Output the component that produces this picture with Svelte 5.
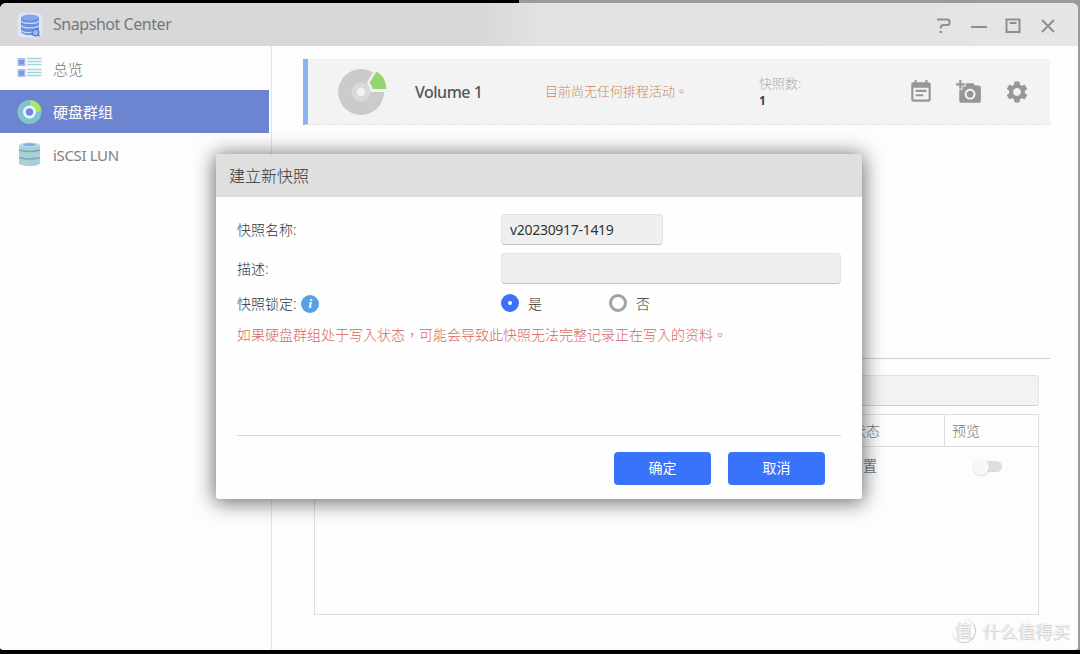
<script lang="ts">
  type MenuItem = { id: string; label: string };

  const menu: MenuItem[] = [
    { id: 'overview', label: '总览' },
    { id: 'volume', label: '硬盘群组' },
    { id: 'lun', label: 'iSCSI LUN' }
  ];

  let active = $state('volume');
  let snapshotName = $state('v20230917-1419');
  let description = $state('');
  let locked = $state(true);
</script>

<div class="desktop">
  <div class="window">
    <header class="titlebar">
      <svg class="app-icon" width="26" height="26" viewBox="0 0 26 26">
        <rect x="0.5" y="0.5" width="25" height="25" rx="6" fill="#dce6f8" />
        <path d="M4 5v14.5c0 2 4 3.700 9 3.700s9-1.700 9-3.700V5z" fill="#6f90dc" />
        <ellipse cx="13" cy="5.500" rx="9" ry="3" fill="#85a6e8" />
        <path d="M4 9.200c2 3 16 3 18 0M4 13.700c2 3 16 3 18 0M4 18.200c2 3 10 3 13 1.500" fill="none" stroke="#c3d5f8" stroke-width="1.300" />
        <circle cx="18.500" cy="20.500" r="3.300" fill="#9db7ee" stroke="#5a7dd2" stroke-width="1.400" />
        <path d="M21 23l1.500 1.200" stroke="#5a7dd2" stroke-width="1.400" />
      </svg>
      <h1>Snapshot Center</h1>
      <div class="controls">
        <svg width="16" height="18" viewBox="0 0 16 18" fill="none" stroke="#8f8f8f" stroke-width="2">
          <path d="M1 2.500h10.500q2 0 2 2v1.500q0 2-2 2H7.500q-3 0-3 3.500" />
          <path d="M3.500 15h2.500" />
        </svg>
        <svg width="16" height="18" viewBox="0 0 16 18" fill="none" stroke="#8f8f8f" stroke-width="2">
          <path d="M0 10h16" />
        </svg>
        <svg width="16" height="18" viewBox="0 0 16 18" fill="none" stroke="#8f8f8f" stroke-width="2">
          <path d="M1.500 2.500h13v12.500h-13zM4.500 6h7" />
        </svg>
        <svg width="16" height="18" viewBox="0 0 16 18" fill="none" stroke="#8f8f8f" stroke-width="2">
          <path d="M2 3l12 12M14 3L2 15" />
        </svg>
      </div>
    </header>

    <div class="body">
      <nav class="sidebar">
        {#each menu as item}
          <button class="menu-item" class:active={active === item.id} onclick={() => (active = item.id)}>
            {#if item.id === 'overview'}
              <svg width="26" height="26" viewBox="0 0 26 26">
                <path d="M1.500 3h8v8h-8zM1.500 14h8v8h-8z" fill="#a9c0f0" />
                <path d="M3 5h5v4.500H3zM3 16h5v4.500H3z" fill="#7796e4" />
                <path d="M11 3.500h14.500M11 6.500h14.500M11 9.500h14.500M11 14.500h14.500M11 17.500h14.500M11 20.500h14.500" stroke="#a5d5dc" stroke-width="1.500" />
              </svg>
            {:else if item.id === 'volume'}
              <svg width="26" height="26" viewBox="0 0 26 26">
                <circle cx="13.500" cy="13" r="12" fill="#7fc4cf" />
                <path d="M14.500 1a12 12 0 0 1 11 11l-5.500 1a6.500 6.500 0 0 0-5.500-6z" fill="#abe866" />
                <circle cx="13.500" cy="13" r="6.500" fill="#f1f5fd" />
                <circle cx="13.500" cy="13" r="3.700" fill="#7685df" />
              </svg>
            {:else}
              <svg width="26" height="26" viewBox="0 0 26 26">
                <path d="M3 3v5q10.500 3 21 0V3zM3 8.500v6q10.500 3.500 21 0v-6zM3 15.500v6.500q10.500 4.500 21 0v-6.500z" fill="#a9d0d6" />
                <path d="M3 8q10.500 3 21 0M3 15.500q10.500 3 21 0" fill="none" stroke="#7aa9b4" stroke-width="1.500" />
                <ellipse cx="13.500" cy="2.900" rx="10.300" ry="2.300" fill="#b9dde2" />
                <ellipse cx="13.500" cy="2.700" rx="6.500" ry="1.400" fill="#8aa6e8" />
              </svg>
            {/if}
            <span>{item.label}</span>
          </button>
        {/each}
      </nav>

      <main class="content">
        <section class="volume">
          <svg class="disk" width="50" height="50" viewBox="0 0 50 50">
            <circle cx="24" cy="27" r="23" fill="#cbcbcb" />
            <circle cx="24" cy="27" r="9.500" fill="#d9d9d9" />
            <path d="M39 5.500L31.500 18q3 3.500 3.500 7.500h16" fill="#f3f3f3" stroke="#f3f3f3" stroke-width="3" />
            <circle cx="24" cy="27" r="4.200" fill="#f3f3f3" />
            <path d="M39.500 6.500Q49 12 49.500 24H35.500Q35 20 32.500 17.500z" fill="#96d56f" />
          </svg>
          <strong class="volume-name">Volume 1</strong>
          <span class="schedule">目前尚无任何排程活动。</span>
          <div class="count">
            <span>快照数:</span>
            <b>1</b>
          </div>
          <div class="tools">
            <svg width="26" height="26" viewBox="0 0 24 24" fill="#979797">
              <path d="M17 10H7v2h10v-2zm2-7h-1V1h-2v2H8V1H6v2H5c-1.110 0-1.990.9-1.990 2L3 19c0 1.100.89 2 2 2h14c1.100 0 2-.9 2-2V5c0-1.100-.9-2-2-2zm0 16H5V8h14v11zm-5-5H7v2h7v-2z" />
            </svg>
            <svg width="26" height="26" viewBox="0 0 24 24" fill="#979797">
              <path d="M3 4V1h2v3h3v2H5v3H3V6H0V4h3zm3 6V7h3V4h7l1.830 2H21c1.100 0 2 .9 2 2v12c0 1.100-.9 2-2 2H5c-1.100 0-2-.9-2-2V10h3zm7 9c2.760 0 5-2.240 5-5s-2.240-5-5-5-5 2.240-5 5 2.240 5 5 5zm-3.200-5c0 1.770 1.430 3.200 3.200 3.200s3.200-1.430 3.200-3.200-1.430-3.200-3.200-3.200-3.200 1.430-3.200 3.200z" />
            </svg>
            <svg width="26" height="26" viewBox="0 0 24 24" fill="#979797">
              <path d="M19.140 12.940c.04-.3.060-.61.060-.94 0-.32-.02-.64-.07-.94l2.030-1.580c.18-.14.23-.41.12-.61l-1.920-3.320c-.12-.22-.37-.29-.59-.22l-2.390.96c-.5-.38-1.030-.7-1.620-.94l-.36-2.540c-.04-.24-.24-.41-.48-.41h-3.840c-.24 0-.43.17-.47.41l-.36 2.540c-.59.24-1.130.57-1.620.94l-2.390-.96c-.22-.08-.47 0-.59.22L2.740 8.870c-.12.21-.08.47.12.61l2.030 1.580c-.05.3-.09.63-.09.94s.02.64.07.94l-2.030 1.580c-.18.14-.23.41-.12.61l1.920 3.320c.12.22.37.29.59.22l2.390-.96c.5.38 1.030.7 1.620.94l.36 2.540c.05.24.24.41.48.41h3.840c.24 0 .44-.17.47-.41l.36-2.540c.59-.24 1.130-.56 1.620-.94l2.390.96c.22.08.47 0 .59-.22l1.920-3.320c.12-.22.07-.47-.12-.61l-2.010-1.580zM12 15.600c-1.980 0-3.600-1.620-3.600-3.600s1.620-3.600 3.600-3.600 3.600 1.620 3.600 3.600-1.620 3.600-3.600 3.600z" />
            </svg>
          </div>
        </section>

        <section class="snapshots">
          <div class="search"></div>
          <div class="table">
            <div class="row head">
              <span class="state">状态</span>
              <span class="preview">预览</span>
            </div>
            <div class="row item">
              <span class="state">闲置</span>
              <span class="preview"><i class="toggle"></i></span>
            </div>
          </div>
        </section>
      </main>
    </div>
  </div>

  <div class="dialog">
    <h2>建立新快照</h2>
    <div class="form">
      <div class="field name">
        <label for="name">快照名称:</label>
        <input id="name" class="short" bind:value={snapshotName} />
      </div>
      <div class="field desc">
        <label for="desc">描述:</label>
        <input id="desc" bind:value={description} />
      </div>
      <div class="field lock">
        <span class="label">
          快照锁定:
          <i class="info">i</i>
        </span>
        <button class="radio" class:checked={locked} onclick={() => (locked = true)}><i></i>是</button>
        <button class="radio" class:checked={!locked} onclick={() => (locked = false)}><i></i>否</button>
      </div>
      <p class="warning">如果硬盘群组处于写入状态，可能会导致此快照无法完整记录正在写入的资料。</p>
    </div>
    <footer>
      <button class="btn-primary">确定</button>
      <button class="btn-primary">取消</button>
    </footer>
  </div>

  <div class="watermark">
    <span class="badge">值</span>
    <span>什么值得买</span>
  </div>
</div>

<style>
  :global(body) {
    margin: 0;
    overflow: hidden;
  }

  * {
    box-sizing: border-box;
  }

  .desktop {
    position: relative;
    width: 1080px;
    height: 654px;
    padding: 3px 2px 4px 0;
    overflow: hidden;
    background: linear-gradient(#0000 650px, #000 650px), linear-gradient(90deg, #000 519px, #9b9b9b 519px);
    font-family: 'Noto Sans', 'Noto Sans CJK SC', sans-serif;
    font-size: 14px;
    font-weight: 300;
    color: #333;
  }

  button,
  input {
    border: 0;
    margin: 0;
    padding: 0;
    background: none;
    font: inherit;
    color: inherit;
  }

  svg {
    display: block;
    flex-shrink: 0;
  }

  .window {
    display: flex;
    flex-direction: column;
    height: 647px;
    border-radius: 6px 6px 3px 3px;
    overflow: hidden;
    background: #fdfdfd;
  }

  .titlebar {
    display: flex;
    align-items: center;
    height: 43px;
    padding: 0 22.500px 0 17px;
    background: linear-gradient(90deg, #d8d8d8 480px, #e2e2e4 540px, #e2e2e4 800px, #e6e6e6);
  }

  h1 {
    flex: 1;
    margin: 0 0 1px 10px;
    font-size: 16px;
    font-weight: 400;
    letter-spacing: -0.45px;
    color: #777;
  }

  .controls {
    display: flex;
    gap: 18.5px;
    margin-top: 3px;
  }

  .body {
    display: flex;
    flex: 1;
  }

  .sidebar {
    width: 272px;
    padding-right: 2px;
    border-right: 1px solid #e4e4e4;
  }

  .menu-item {
    display: flex;
    align-items: center;
    gap: 11px;
    width: 100%;
    height: 43px;
    padding-left: 16px;
    font-size: 15px;
    color: #777;
  }

  .menu-item:first-child {
    height: 44px;
  }

  .menu-item:last-child {
    font-weight: 400;
    letter-spacing: -0.35px;
    color: #808080;
  }

  .menu-item.active {
    background: #6d84d0;
    color: #fff;
    font-weight: 400;
  }

  .content {
    display: flex;
    flex-direction: column;
    flex: 1;
    padding: 13px 28px 0 31px;
  }

  .volume {
    display: flex;
    align-items: center;
    height: 66px;
    padding-left: 29px;
    border-left: 5px solid #8ab4ee;
    border-bottom: 1px dashed #e4e4e4;
    background: #f3f3f3;
  }

  .disk {
    margin-top: -4px;
  }

  .volume-name {
    width: 130px;
    margin-left: 28px;
    font-size: 16px;
    font-weight: 500;
    letter-spacing: -0.5px;
    color: #555;
  }

  .schedule {
    width: 214px;
    margin-top: -3px;
    font-family: 'Noto Sans', 'Noto Sans CJK TC', sans-serif;
    font-size: 13px;
    color: #c78a60;
  }

  .count {
    display: flex;
    flex-direction: column;
    width: 149px;
    font-size: 13px;
    line-height: 18px;
    color: #aaa;
  }

  .count b {
    font-size: 12px;
    font-weight: 700;
    color: #444;
  }

  .tools {
    display: flex;
    align-items: center;
    gap: 22px;
  }

  .snapshots {
    height: 257px;
    margin-top: 233px;
    padding: 16px 11px 0;
    border-top: 1px solid #cdcdcd;
  }

  .search {
    height: 31px;
    border: 1px solid #e3e3e3;
    border-bottom-color: #d0d0d0;
    border-radius: 3px;
    background: #f2f2f2;
  }

  .table {
    height: 201px;
    margin-top: 8px;
    border: 1px solid #dedede;
  }

  .row {
    display: flex;
    justify-content: flex-end;
    height: 39px;
    line-height: 37px;
    color: #777;
  }

  .row.head {
    height: 32px;
    line-height: 31px;
    border-bottom: 1px solid #dedede;
  }

  .state {
    width: 92px;
  }

  .item .state {
    width: 95px;
    font-weight: 400;
  }

  .preview {
    display: flex;
    align-items: center;
    width: 94px;
    padding-left: 7px;
  }

  .head .preview {
    border-left: 1px solid #dedede;
  }

  .toggle {
    display: flex;
    align-items: center;
    width: 25px;
    height: 11px;
    margin-left: 26px;
    border-radius: 6px;
    background: #dedede;
  }

  .toggle::before {
    content: '';
    width: 16px;
    height: 16px;
    margin-left: -4px;
    border-radius: 50%;
    background: #f8f8f8;
    box-shadow: 0 1px 2px rgba(0, 0, 0, 0.15);
  }

  .dialog {
    position: absolute;
    top: 154px;
    left: 216px;
    width: 646px;
    height: 345px;
    border-radius: 3px;
    overflow: hidden;
    background: #fefefe;
    box-shadow: 0 2px 20px 2px rgba(0, 0, 0, 0.55);
  }

  h2 {
    height: 43px;
    margin: 0;
    padding-left: 13px;
    background: #dfdfdf;
    font-size: 16px;
    font-weight: 300;
    line-height: 45px;
    color: #333;
  }

  .form {
    display: flex;
    flex-direction: column;
    height: 239px;
    margin: 0 21px;
    padding-top: 17px;
    border-bottom: 1px solid #d8d8d8;
  }

  .field {
    display: flex;
    align-items: center;
    height: 31px;
    margin-bottom: 8px;
  }

  .field.desc {
    margin-bottom: 6px;
  }

  .field.lock {
    height: 26px;
    margin-bottom: 9px;
  }

  label,
  .label {
    width: 264px;
    flex-shrink: 0;
  }

  label {
    padding-bottom: 2px;
  }

  .label {
    display: flex;
    align-items: center;
    gap: 5px;
  }

  input {
    width: 340px;
    height: 31px;
    padding: 0 8px;
    border: 1px solid #e2e2e2;
    border-bottom-color: #c4c4c4;
    border-radius: 4px;
    background: #efefef;
    font-weight: 400;
    letter-spacing: -0.3px;
  }

  input.short {
    width: 162px;
  }

  .info {
    width: 18px;
    height: 18px;
    margin-top: 2px;
    border-radius: 50%;
    background: #599fe4;
    color: #fff;
    font: italic bold 13px/18px 'Liberation Serif', serif;
    text-align: center;
  }

  .radio {
    display: flex;
    align-items: center;
    gap: 9px;
    width: 108px;
  }

  .radio i {
    width: 18px;
    height: 18px;
    border: 3px solid #a2a2a2;
    border-radius: 50%;
  }

  .radio.checked i {
    border: 7px solid #3d72f6;
    background: #fff;
  }

  .warning {
    margin: 0;
    font-family: 'Noto Sans', 'Noto Sans CJK TC', sans-serif;
    line-height: 20px;
    white-space: nowrap;
    color: #d6665f;
  }

  footer {
    display: flex;
    justify-content: flex-end;
    gap: 17px;
    padding: 16px 37px;
  }

  .btn-primary {
    width: 97px;
    height: 33px;
    padding-bottom: 3px;
    border-radius: 4px;
    background: #3a73fb;
    color: #fff;
    font-weight: 400;
  }

  .watermark {
    position: absolute;
    right: 10px;
    bottom: 11px;
    display: flex;
    align-items: center;
    gap: 7px;
    font-size: 17.500px;
    line-height: 24px;
    color: #fff;
    text-shadow: 0 0 1px #999, 1px 1px 1px #ccc;
  }

  .badge {
    width: 24px;
    height: 24px;
    border-right: 1px solid #c8c8c8;
    border-bottom: 1px solid #c8c8c8;
    border-radius: 50%;
    line-height: 22px;
    text-align: center;
  }
</style>
